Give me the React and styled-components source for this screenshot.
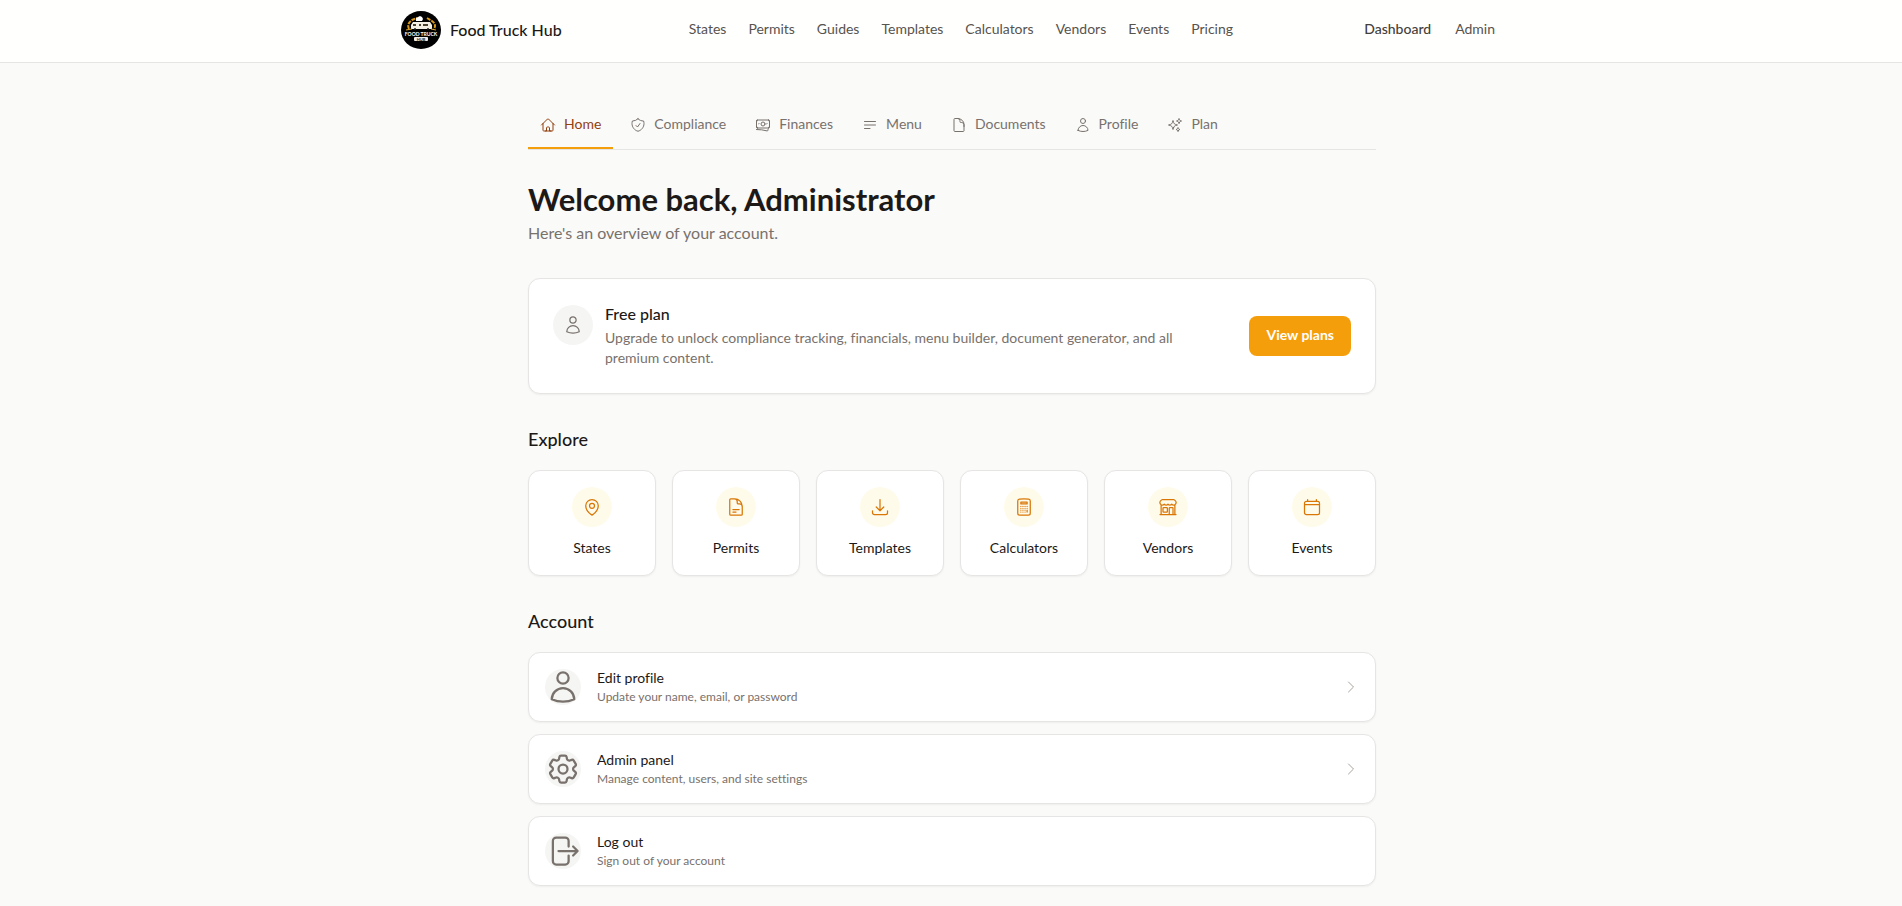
import React from "react";
import styled, { createGlobalStyle } from "styled-components";
import {
    HiOutlineArrowDownTray,
    HiOutlineArrowRightOnRectangle,
    HiOutlineBanknotes,
    HiOutlineBars3BottomLeft,
    HiOutlineBuildingStorefront,
    HiOutlineCalculator,
    HiOutlineChevronRight,
    HiOutlineCog6Tooth,
    HiOutlineDocument,
    HiOutlineDocumentText,
    HiOutlineHome,
    HiOutlineMapPin,
    HiOutlineShieldCheck,
    HiOutlineSparkles,
    HiOutlineUser,
} from "react-icons/hi2";

const navLinks = [
    "States",
    "Permits",
    "Guides",
    "Templates",
    "Calculators",
    "Vendors",
    "Events",
    "Pricing",
];

const tabs = [
    { label: "Home", icon: HiOutlineHome, active: true },
    { label: "Compliance", icon: HiOutlineShieldCheck },
    { label: "Finances", icon: HiOutlineBanknotes },
    { label: "Menu", icon: HiOutlineBars3BottomLeft },
    { label: "Documents", icon: HiOutlineDocument },
    { label: "Profile", icon: HiOutlineUser },
    { label: "Plan", icon: HiOutlineSparkles },
];

const CalendarIcon = () => (
    <svg
        viewBox='0 0 24 24'
        fill='none'
        stroke='currentColor'
        strokeWidth='1.5'
        strokeLinecap='round'
        strokeLinejoin='round'
        aria-hidden='true'
    >
        <path d='M6.75 3v2.25M17.25 3v2.25M3 18.75V7.5a2.25 2.25 0 0 1 2.25-2.25h13.5A2.25 2.25 0 0 1 21 7.5v11.25A2.25 2.25 0 0 1 18.75 21H5.25A2.25 2.25 0 0 1 3 18.75zM3 9.25h18' />
    </svg>
);

const explore = [
    { label: "States", icon: HiOutlineMapPin },
    { label: "Permits", icon: HiOutlineDocumentText },
    { label: "Templates", icon: HiOutlineArrowDownTray },
    { label: "Calculators", icon: HiOutlineCalculator },
    { label: "Vendors", icon: HiOutlineBuildingStorefront },
    { label: "Events", icon: CalendarIcon },
];

const account = [
    {
        title: "Edit profile",
        text: "Update your name, email, or password",
        icon: HiOutlineUser,
    },
    {
        title: "Admin panel",
        text: "Manage content, users, and site settings",
        icon: HiOutlineCog6Tooth,
    },
];

function Logo() {
    return (
        <LogoMark viewBox='0 0 40 38' aria-hidden='true'>
            <ellipse cx='20' cy='19' rx='20' ry='19' fill='#000' />
            <path
                d='M8 18c-2-4 0-7 3-9l5-2M26 7l5 3c3 2 4 5 2 8'
                fill='none'
                stroke='#d99a1c'
                strokeWidth='2'
                strokeDasharray='4 1'
            />
            <path d='M15 10l0-3 2-1 2-1 2 1 1 2-1 2z' fill='#fff' />
            <path d='M10 14l2-3h17l2 3v4H10z' fill='#f3efe4' />
            <path d='M12 13h3v2h-3zM18 13h2v2h-2zM22 13h5v2h-5z' fill='#4a4030' />
            <path d='M5 19l6-1M30 18l5 1' stroke='#e0a52b' fill='none' />
            <circle cx='14' cy='18' r='1' fill='#222' />
            <circle cx='27' cy='18' r='1' fill='#222' />
            <text x='20' y='25' textAnchor='middle' fontSize='5' fontWeight='700' fill='#fff'>
                FOOD TRUCK
            </text>
            <rect x='13' y='26' width='14' height='4' rx='1' fill='#eee' />
            <text x='20' y='30' textAnchor='middle' fontSize='4' fontWeight='700' fill='#222'>
                HUB
            </text>
        </LogoMark>
    );
}

function Header() {
    return (
        <TopBar>
            <TopBarInner>
                <Brand href='#'>
                    <Logo />
                    Food Truck Hub
                </Brand>
                <Nav aria-label='Main'>
                    {navLinks.map((link) => (
                        <NavLink key={link} href='#'>
                            {link}
                        </NavLink>
                    ))}
                </Nav>
                <UserNav aria-label='User'>
                    <NavLink href='#' $strong>
                        Dashboard
                    </NavLink>
                    <NavLink href='#'>Admin</NavLink>
                </UserNav>
            </TopBarInner>
        </TopBar>
    );
}

function App() {
    return (
        <>
            <GlobalStyle />
            <Header />
            <Main>
                <Tabs aria-label='Account sections'>
                    {tabs.map(({ label, icon: Icon, active }) => (
                        <Tab key={label} href='#' $active={active}>
                            <Icon />
                            <span>{label}</span>
                        </Tab>
                    ))}
                </Tabs>

                <Title>Welcome back, Administrator</Title>
                <Subtitle>Here's an overview of your account.</Subtitle>

                <PlanCard>
                    <PlanIcon>
                        <HiOutlineUser />
                    </PlanIcon>
                    <PlanBody>
                        <h2>Free plan</h2>
                        <p>
                            Upgrade to unlock compliance tracking, financials, menu
                            builder, document generator, and all premium content.
                        </p>
                    </PlanBody>
                    <PlanButton type='button'>View plans</PlanButton>
                </PlanCard>

                <SectionTitle>Explore</SectionTitle>
                <ExploreGrid>
                    {explore.map(({ label, icon: Icon }) => (
                        <ExploreCard key={label} href='#'>
                            <ExploreIcon>
                                <Icon />
                            </ExploreIcon>
                            {label}
                        </ExploreCard>
                    ))}
                </ExploreGrid>

                <SectionTitle>Account</SectionTitle>
                <AccountList>
                    {account.map(({ title, text, icon: Icon }) => (
                        <AccountRow key={title} href='#'>
                            <AccountIcon>
                                <Icon />
                            </AccountIcon>
                            <AccountText>
                                <strong>{title}</strong>
                                <span>{text}</span>
                            </AccountText>
                            <Chevron />
                        </AccountRow>
                    ))}
                    <AccountRow as='button' type='button'>
                        <AccountIcon>
                            <HiOutlineArrowRightOnRectangle />
                        </AccountIcon>
                        <AccountText>
                            <strong>Log out</strong>
                            <span>Sign out of your account</span>
                        </AccountText>
                    </AccountRow>
                </AccountList>
            </Main>
        </>
    );
}

const GlobalStyle = createGlobalStyle`
    * {
        box-sizing: border-box;
    }
    body {
        margin: 0;
        background: #fafaf9;
        color: #1c1917;
        font-family: Lato, "Liberation Sans", sans-serif;
        font-size: 14px;
        line-height: 20px;
        font-variant-ligatures: none;
    }
    h1, h2, p {
        margin: 0;
    }
    a {
        color: inherit;
        text-decoration: none;
    }
    button {
        font: inherit;
        font-variant-ligatures: none;
        color: inherit;
        cursor: pointer;
    }
`;

const TopBar = styled.header`
    background: #fffffe;
    border-bottom: 1px solid #e7e5e4;
`;
const TopBarInner = styled.div`
    display: flex;
    align-items: center;
    justify-content: space-between;
    max-width: 1132px;
    margin: 0 auto;
    padding: 11px 22px 13px 16px;
`;
const Brand = styled.a`
    display: flex;
    align-items: center;
    gap: 9px;
    font-size: 16px;
    font-weight: 500;
`;
const LogoMark = styled.svg`
    width: 40px;
    height: 38px;
`;
const Nav = styled.nav`
    display: flex;
    gap: 22px;
    margin-right: 4px;
    padding-bottom: 2px;
`;
const UserNav = styled.nav`
    display: flex;
    gap: 24px;
    padding-bottom: 2px;
`;
const NavLink = styled.a`
    color: ${(props) => (props.$strong ? "#44403c" : "#57534e")};
    font-weight: ${(props) => (props.$strong ? 500 : 400)};

    &:hover {
        color: #1c1917;
    }
`;
const Main = styled.main`
    max-width: 880px;
    margin: 0 auto;
    padding: 40px 15px 20px 17px;
`;
const Tabs = styled.nav`
    display: flex;
    gap: 5px;
    margin-bottom: 31px;
    border-bottom: 1px solid #e7e5e4;
`;
const Tab = styled.a`
    display: flex;
    align-items: center;
    gap: 8px;
    padding: 11px 12px;
    border-bottom: 2px solid ${(props) => (props.$active ? "#f59e0b" : "transparent")};
    color: ${(props) => (props.$active ? "#92400e" : "#78716c")};

    svg {
        width: 16px;
        height: 16px;
    }
    span {
        padding-bottom: 2px;
    }
`;
const Title = styled.h1`
    font-size: 31px;
    line-height: 36px;
    font-weight: 700;
`;
const Subtitle = styled.p`
    margin-top: 4px;
    font-size: 16px;
    line-height: 24px;
    color: #78716c;
`;
const Card = styled.div`
    background: #fff;
    border: 1px solid #e7e5e4;
    border-radius: 12px;
    box-shadow: 0 1px 2px rgba(0, 0, 0, 0.05);
`;
const Circle = styled.span`
    display: flex;
    flex-shrink: 0;
    align-items: center;
    justify-content: center;
    width: 40px;
    height: 40px;
    border-radius: 50%;
    background: #f5f5f4;
    color: #78716c;

    svg {
        width: 20px;
        height: 20px;
    }
`;
const PlanCard = styled(Card)`
    display: flex;
    align-items: center;
    margin-top: 33px;
    padding: 24px;
`;
const PlanIcon = styled(Circle)`
    align-self: flex-start;
    margin: 2px 12px 0 0;
`;
const PlanBody = styled.div`
    flex: 1;
    margin-right: 48px;
    padding-bottom: 1px;

    h2 {
        margin-bottom: 3px;
        font-size: 16px;
        line-height: 22px;
        font-weight: 500;
    }
    p {
        color: #78716c;
    }
`;
const PlanButton = styled.button`
    padding: 9px 17px 11px;
    border: none;
    border-radius: 8px;
    background: #f59e0b;
    color: #fff;
    font-weight: 700;
`;
const SectionTitle = styled.h2`
    margin: 31px 0 17px;
    font-size: 18px;
    line-height: 28px;
    font-weight: 500;
`;
const ExploreGrid = styled.div`
    display: grid;
    grid-template-columns: repeat(6, 1fr);
    gap: 16px;
`;
const ExploreCard = styled(Card).attrs({ as: "a" })`
    display: flex;
    flex-direction: column;
    align-items: center;
    gap: 10px;
    padding: 16px;
    line-height: 22px;
`;
const ExploreIcon = styled(Circle)`
    background: #fffbeb;
    color: #d97706;
`;
const AccountList = styled.div`
    display: grid;
    gap: 12px;
`;
const AccountRow = styled(Card).attrs((props) => ({ as: props.as || "a" }))`
    display: flex;
    align-items: center;
    gap: 16px;
    width: 100%;
    padding: 16px;
    text-align: left;
`;
const AccountIcon = styled(Circle)`
    width: 36px;
    height: 36px;

    svg {
        width: 36px;
        height: 36px;
    }
`;
const AccountText = styled.span`
    flex: 1;

    strong,
    span {
        display: block;
    }
    strong {
        margin-bottom: 2px;
        line-height: 18px;
        font-weight: 400;
    }
    span {
        font-size: 12px;
        line-height: 16px;
        color: #78716c;
    }
`;
const Chevron = styled(HiOutlineChevronRight)`
    width: 16px;
    height: 16px;
    color: #a8a29e;
`;

export default App;
